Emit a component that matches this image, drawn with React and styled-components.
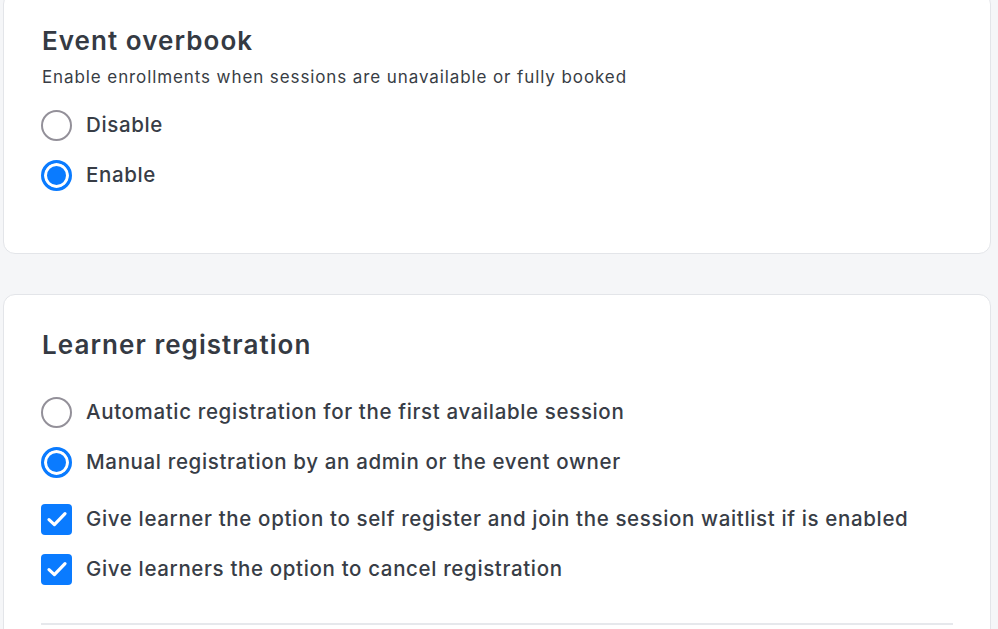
import React, { useState } from "react";
import styled, { createGlobalStyle } from "styled-components";

const GlobalStyle = createGlobalStyle`
  html, body {
    margin: 0;
    padding: 0;
    background: #f5f6f8;
    overflow: hidden;
  }
  body {
    font-family: Inter, "Noto Sans", Arial, sans-serif;
    color: #363c45;
    -webkit-font-smoothing: antialiased;
  }
  * { box-sizing: border-box; }
`;

const Page = styled.main`
  display: flex;
  flex-direction: column;
  gap: 40px;
  width: 991px;
  padding-left: 3px;
  margin-top: -8px;
`;

const Card = styled.section`
  background: #ffffff;
  border: 1px solid #e3e5e9;
  border-radius: 12px;
  padding: ${(p) => p.$pad || "32px 37px 63px"};
  display: flex;
  flex-direction: column;
`;

const Title = styled.h2`
  margin: 0;
  padding-left: 1px;
  font-size: 26px;
  line-height: 32px;
  font-weight: 600;
  letter-spacing: 1.05px;
  color: #353a43;
`;

const Subtitle = styled.p`
  margin: 8px 0 0;
  padding-left: 1px;
  font-size: 17px;
  line-height: 24px;
  letter-spacing: 0.9px;
  color: #383d45;
`;

const Options = styled.div`
  display: flex;
  flex-direction: column;
  gap: 20px;
  margin-top: ${(p) => p.$top || "21px"};
`;

const Option = styled.label`
  display: flex;
  align-items: center;
  gap: 14px;
  height: 30px;
  font-size: 20.5px;
  line-height: 30px;
  font-weight: 500;
  letter-spacing: 0.64px;
  color: #383d46;
  cursor: pointer;
`;

const RadioMark = styled.span`
  flex: 0 0 auto;
  width: 31px;
  height: 31px;
  border-radius: 50%;
  border: ${(p) => (p.$on ? "3px solid #0a7bff" : "2.5px solid #939099")};
  background: ${(p) => (p.$on ? "#0a7bff" : "#ffffff")};
  box-shadow: ${(p) => (p.$on ? "inset 0 0 0 3px #ffffff" : "none")};
`;

const CheckMark = styled.span`
  flex: 0 0 auto;
  width: 31px;
  height: 31px;
  border-radius: 4px;
  background: #0a7bff;
  display: flex;
  align-items: center;
  justify-content: center;
`;

const Divider = styled.hr`
  margin: 39px 0 0;
  border: 0;
  border-top: 2px solid #e6e8ec;
`;

function Radio({ checked, label, onSelect }) {
  return (
    <Option onClick={onSelect}>
      <RadioMark $on={checked} />
      {label}
    </Option>
  );
}

function Check({ checked, label, onToggle }) {
  return (
    <Option onClick={onToggle}>
      <CheckMark>
        {checked && (
          <svg width="22" height="18" viewBox="0 0 22 18" fill="none">
            <path
              d="M3 9.6 L8.4 14.6 L19 3.6"
              stroke="#ffffff"
              strokeWidth="3.2"
              strokeLinecap="round"
              strokeLinejoin="round"
            />
          </svg>
        )}
      </CheckMark>
      {label}
    </Option>
  );
}

export default function App() {
  const [overbook, setOverbook] = useState("enable");
  const [mode, setMode] = useState("manual");
  const [selfReg, setSelfReg] = useState(true);
  const [cancel, setCancel] = useState(true);

  return (
    <>
      <GlobalStyle />
      <Page>
        <Card>
          <Title>Event overbook</Title>
          <Subtitle>
            Enable enrollments when sessions are unavailable or fully booked
          </Subtitle>
          <Options>
            <Radio
              label="Disable"
              checked={overbook === "disable"}
              onSelect={() => setOverbook("disable")}
            />
            <Radio
              label="Enable"
              checked={overbook === "enable"}
              onSelect={() => setOverbook("enable")}
            />
          </Options>
        </Card>

        <Card $pad="34px 37px 40px">
          <Title>Learner registration</Title>
          <Options $top="36px">
            <Radio
              label="Automatic registration for the first available session"
              checked={mode === "auto"}
              onSelect={() => setMode("auto")}
            />
            <Radio
              label="Manual registration by an admin or the event owner"
              checked={mode === "manual"}
              onSelect={() => setMode("manual")}
            />
          </Options>
          <Options $top="27px">
            <Check
              label="Give learner the option to self register and join the session waitlist if is enabled"
              checked={selfReg}
              onToggle={() => setSelfReg((v) => !v)}
            />
            <Check
              label="Give learners the option to cancel registration"
              checked={cancel}
              onToggle={() => setCancel((v) => !v)}
            />
          </Options>
          <Divider />
        </Card>
      </Page>
    </>
  );
}
